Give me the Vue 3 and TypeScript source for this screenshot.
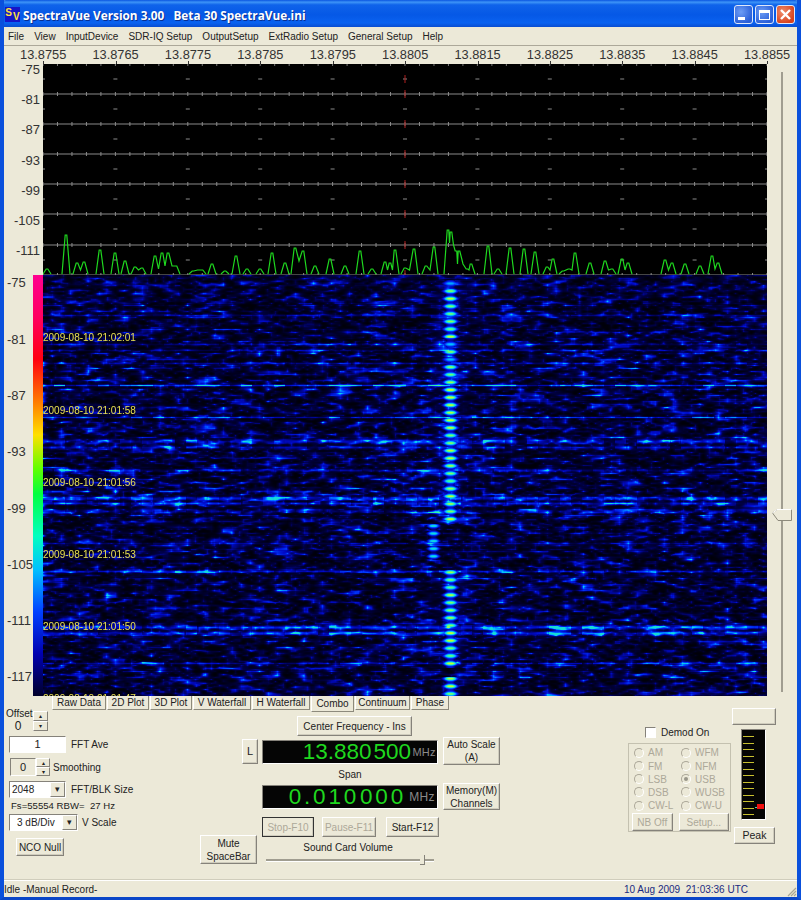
<script setup lang="ts">
import { ref, onMounted } from 'vue'

const menus = ['File', 'View', 'InputDevice', 'SDR-IQ Setup', 'OutputSetup', 'ExtRadio Setup', 'General Setup', 'Help']
const freqs = ['13.8755', '13.8765', '13.8775', '13.8785', '13.8795', '13.8805', '13.8815', '13.8825', '13.8835', '13.8845', '13.8855']
const plotDb = [-75, -81, -87, -93, -99, -105, -111]
const fallDb = [-75, -81, -87, -93, -99, -105, -111, -117]
const stamps = ['21:02:01', '21:01:58', '21:01:56', '21:01:53', '21:01:50', '21:01:47']
const tabs = [
  { label: 'Raw Data', w: 54 },
  { label: '2D Plot', w: 42 },
  { label: '3D Plot', w: 42 },
  { label: 'V Waterfall', w: 58 },
  { label: 'H Waterfall', w: 58 },
  { label: 'Combo', w: 43, active: true },
  { label: 'Continuum', w: 55 },
  { label: 'Phase', w: 38 },
]
const radios = ['AM', 'WFM', 'FM', 'NFM', 'LSB', 'USB', 'DSB', 'WUSB', 'CW-L', 'CW-U']
const meterTicks = Array.from({ length: 13 }, (_, i) => i)

// x, y pairs read off the spectrum trace
const peaks: [number, number][] = [
  [47, 268], [66, 234], [77, 262], [84, 261], [100, 249], [115, 252], [125, 260], [135, 266], [142, 267],
  [155, 255], [162, 252], [168, 252], [176, 265], [193, 270], [202, 269], [212, 263], [225, 270], [236, 255],
  [247, 268], [260, 268], [272, 252], [285, 262], [295, 247], [303, 250], [315, 265], [330, 258], [345, 265],
  [360, 250], [372, 268], [385, 261], [390, 262], [395, 249], [405, 267], [414, 248], [426, 265], [434, 246],
  [448, 229], [451, 231], [456, 250], [459, 250], [467, 268], [471, 263], [488, 245], [498, 268], [510, 247],
  [524, 248], [535, 251], [547, 266], [553, 258], [563, 270], [569, 268], [575, 252], [590, 262], [605, 260],
  [612, 268], [622, 258], [628, 262], [665, 259], [672, 262], [685, 263], [700, 265], [712, 255], [718, 262],
]

// each cluster of peaks starts and ends on the baseline, so the grey line stays visible between them
function tracePath() {
  let d = ''
  peaks.forEach(([x, y], i) => {
    const px = x - 43
    const py = y - 64
    const prev = peaks[i - 1]
    const next = peaks[i + 1]
    if (!prev || x - prev[0] > 9) d += `M${px - 4} 210 `
    d += `L${px - 0.8} ${py + 1} L${px + 0.8} ${py + 1} `
    if (!next || next[0] - x > 9) d += `L${px + 4} 210 `
    else d += `L${px + (next[0] - x) / 2} ${Math.min(py + 14, 206)} `
  })
  return d
}
const trace = tracePath()

const minorTicks = Array.from({ length: 51 }, (_, i) => i * 14.48)
const majorTicks = Array.from({ length: 11 }, (_, i) => i * 72.4)
const gridY = [30, 60, 90, 120, 150, 181, 211]

const fall = ref<HTMLCanvasElement | null>(null)

function mulberry(seed: number) {
  return () => {
    seed |= 0
    seed = (seed + 0x6d2b79f5) | 0
    let t = Math.imul(seed ^ (seed >>> 15), 1 | seed)
    t = (t + Math.imul(t ^ (t >>> 7), 61 | t)) ^ t
    return ((t ^ (t >>> 14)) >>> 0) / 4294967296
  }
}

function colorAt(v: number): [number, number, number] {
  const stops: [number, number, number, number][] = [
    [0, 0, 0, 8],
    [0.22, 0, 0, 70],
    [0.45, 0, 10, 200],
    [0.62, 0, 60, 255],
    [0.78, 0, 190, 255],
    [0.9, 50, 245, 170],
    [1, 190, 255, 50],
  ]
  const c = Math.max(0, Math.min(1, v))
  for (let i = 1; i < stops.length; i++) {
    if (c <= stops[i][0]) {
      const a = stops[i - 1]
      const b = stops[i]
      const t = (c - a[0]) / (b[0] - a[0])
      return [a[1] + (b[1] - a[1]) * t, a[2] + (b[2] - a[2]) * t, a[3] + (b[3] - a[3]) * t]
    }
  }
  return [190, 255, 50]
}

function makeNoise(rnd: () => number, W: number, H: number, cw: number, ch: number) {
  const cols = Math.ceil(W / cw) + 2
  const rows = Math.ceil(H / ch) + 2
  const cells = new Float32Array(cols * rows)
  for (let i = 0; i < cells.length; i++) cells[i] = rnd()
  return (x: number, y: number) => {
    const gx = x / cw
    const gy = y / ch
    const ix = Math.floor(gx)
    const iy = Math.floor(gy)
    const fx = gx - ix
    const fy = gy - iy
    const a = cells[iy * cols + ix]
    const b = cells[iy * cols + ix + 1]
    const c = cells[(iy + 1) * cols + ix]
    const d = cells[(iy + 1) * cols + ix + 1]
    return (a * (1 - fx) + b * fx) * (1 - fy) + (c * (1 - fx) + d * fx) * fy
  }
}

function drawWaterfall() {
  const canvas = fall.value
  if (!canvas) return
  const ctx = canvas.getContext('2d')
  if (!ctx) return
  const W = canvas.width
  const H = canvas.height
  const rnd = mulberry(801)
  const coarse = makeNoise(rnd, W, H, 9, 3)
  const fine = makeNoise(rnd, W, H, 4, 2)

  // horizontal streaks: y inside the waterfall, half height, strength
  const streaks: [number, number, number][] = [
    [40, 1.0, 0.26], [69, 1.2, 0.26], [88, 1.2, 0.28], [110, 1.0, 0.66], [142, 0.9, 0.5],
    [166, 2.4, 0.36], [172, 1.6, 0.34], [195, 1.6, 0.3], [223, 2.0, 0.52], [228, 1.6, 0.44],
    [236, 1.5, 0.26], [296, 1.2, 0.4], [352, 2.0, 0.5], [358, 2.0, 0.44],
    [388, 1.0, 0.36], [268, 1.2, 0.2], [75, 0.9, 0.2],
  ]
  const rowBoost = new Float32Array(H)
  const rowLevel = new Float32Array(H)
  for (const [sy, hh, amp] of streaks) {
    for (let y = Math.max(0, Math.floor(sy - hh * 2)); y < Math.min(H, sy + hh * 2); y++) {
      const d = (y - sy) / hh
      rowBoost[y] = Math.max(rowBoost[y], amp * Math.exp(-d * d))
    }
  }
  for (let y = 0; y < H; y++) rowLevel[y] = 0.85 + 0.3 * rnd()

  // dash pattern for the streaks
  const dash = new Float32Array(W)
  for (let i = 0; i < W; i++) dash[i] = rnd()
  const pulseLevel = new Float32Array(80)
  for (let i = 0; i < pulseLevel.length; i++) pulseLevel[i] = 0.82 + 0.18 * rnd()

  const img = ctx.createImageData(W, H)
  for (let y = 0; y < H; y++) {
    for (let x = 0; x < W; x++) {
      const n1 = coarse(x, y)
      const n2 = fine(x, y)
      let v = (Math.pow(n1, 3) * 0.62 + Math.pow(n2, 2.5) * 0.3) * rowLevel[y]
      if (rowBoost[y] > 0) {
        const on = dash[(Math.floor(x / 11) * 7 + Math.floor(y / 30) * 13) % W]
        v += rowBoost[y] * (0.4 + on * 0.75)
      }
      v = Math.min(v, 0.84)
      // main carrier, pulsing
      if (y > 4 && (y < 249 || (y > 294 && !(y > 392 && y < 402)))) {
        const phase = (y - 8) / 7.6
        const pulse = 0.5 + 0.5 * Math.cos(phase * Math.PI * 2)
        const lvl = pulseLevel[Math.floor(phase + 0.5) & 63]
        const dim = y < 14 || (y > 62 && y < 72) || (y > 80 && y < 90) ? 0.78 : 1
        const dx = (x - 407) / (4.5 + 3.5 * pulse)
        const flat = Math.exp(-Math.pow(Math.abs(dx), 3))
        v = Math.max(v, flat * (0.34 + pulse * 0.56 * lvl) * dim)
        const halo = (x - 407) / 16
        v += Math.exp(-halo * halo) * 0.13
      }
      // carrier that slipped sideways for a moment
      if (y > 248 && y < 286) {
        const pulse = 0.5 + 0.5 * Math.cos(((y - 258) / 7.6) * Math.PI * 2)
        const dx = (x - 390) / (4 + 3 * pulse)
        v = Math.max(v, Math.exp(-Math.pow(Math.abs(dx), 3)) * (0.32 + pulse * 0.52))
      }
      // faint smear to the right of the carrier near the top
      if (y > 10 && y < 45) {
        const dx = (x - 536) / 2
        v += Math.exp(-dx * dx) * 0.14
      }
      const col = colorAt(v)
      const p = (y * W + x) * 4
      img.data[p] = col[0]
      img.data[p + 1] = col[1]
      img.data[p + 2] = col[2]
      img.data[p + 3] = 255
    }
  }
  ctx.putImageData(img, 0, 0)
}

onMounted(drawWaterfall)
</script>

<template>
  <div class="window">
    <header class="titlebar">
      <span class="app-icon"><i>S</i><b>V</b></span>
      <span class="title">SpectraVue Version 3.00&nbsp;&nbsp; Beta 30 SpectraVue.ini</span>
      <span class="caption-btn min"><i></i></span>
      <span class="caption-btn max"><i></i></span>
      <span class="caption-btn close">
        <svg width="13" height="13" viewBox="0 0 13 13"><path d="M2 2 L11 11 M11 2 L2 11" stroke="#fff" stroke-width="2.4" /></svg>
      </span>
    </header>

    <nav class="menubar">
      <span v-for="m in menus" :key="m">{{ m }}</span>
    </nav>

    <section class="scope">
      <div class="scope-main">
        <div class="freq-row">
          <span v-for="f in freqs" :key="f" class="freq">{{ f }}</span>
        </div>

        <div class="plot-row">
          <div class="plot-axis">
            <span v-for="d in plotDb" :key="d">{{ d }}</span>
          </div>
          <svg class="plot" width="724" height="211" viewBox="0 0 724 211">
            <rect width="724" height="211" fill="#000" />
            <g v-for="y in gridY" :key="y">
              <line x1="0" x2="724" :y1="y" :y2="y" stroke="#8a8a8a" stroke-width="1" />
              <line v-for="x in minorTicks" :key="x" :x1="x" :x2="x" :y1="y - 2" :y2="y + 2" stroke="#8a8a8a" stroke-width="1" />
            </g>
            <line v-for="x in minorTicks" :key="'t' + x" :x1="x" :x2="x" y1="0" y2="2" stroke="#777" />
            <g v-for="y in [15, 45, 75, 105, 135, 165, 196]" :key="'d' + y">
              <line v-for="x in majorTicks" :key="x" :x1="x - 2" :x2="x + 2" :y1="y" :y2="y" stroke="#8a8a8a" />
            </g>
            <g stroke="#b02020">
              <line x1="362" x2="362" y1="11" y2="19" />
              <line x1="362" x2="362" y1="26" y2="34" />
              <line x1="362" x2="362" y1="56" y2="64" />
              <line x1="362" x2="362" y1="86" y2="94" />
              <line x1="362" x2="362" y1="116" y2="124" />
              <line x1="362" x2="362" y1="146" y2="154" />
              <line x1="362" x2="362" y1="177" y2="185" />
              <line x1="362" x2="362" y1="206" y2="211" />
            </g>
            <path :d="trace" fill="none" stroke="#1fd81f" stroke-width="1.2" />
          </svg>
        </div>

        <div class="fall-row">
          <div class="fall-axis">
            <span v-for="d in fallDb" :key="d">{{ d }}</span>
          </div>
          <div class="colorbar"></div>
          <div class="fall-wrap">
            <canvas ref="fall" width="724" height="421"></canvas>
            <span
              v-for="(s, i) in stamps"
              :key="s"
              class="stamp"
              :style="{ top: 57 + i * 72.2 + 'px' }"
            >2009-08-10 {{ s }}</span>
          </div>
        </div>
      </div>

      <div class="vslider">
        <div class="vtrack"></div>
        <svg class="vthumb" width="20" height="12" viewBox="0 0 20 12">
          <path d="M0.5 4 L5 0.5 H19.5 V11.5 H6 Z" fill="#ece9d8" stroke="#8d8a7c" />
          <path d="M0.5 4 L5 0.5 H19.5" fill="none" stroke="#fff" />
        </svg>
      </div>
    </section>

    <section class="lower">
      <div class="tabs">
        <span
          v-for="t in tabs"
          :key="t.label"
          class="tab"
          :class="{ active: t.active }"
          :style="{ width: t.w + 'px' }"
        >{{ t.label }}</span>
      </div>

      <div class="panel">
        <div class="col-left">
          <div class="offset">
            <div class="offset-text"><span>Offset</span><span class="offset-val">0</span></div>
            <div class="spin offset-spin"><i>▴</i><i>▾</i></div>
          </div>

          <div class="ctl-row ave">
            <span class="input ave-input">1</span>
            <label>FFT Ave</label>
          </div>

          <div class="ctl-row smooth">
            <span class="input smooth-input">0</span>
            <div class="spin smooth-spin"><i>▴</i><i>▾</i></div>
            <label class="smooth-label">Smoothing</label>
          </div>

          <div class="ctl-row size">
            <span class="combo size-combo"><span>2048</span><i>▾</i></span>
            <label>FFT/BLK Size</label>
          </div>

          <div class="fs">Fs=55554 RBW=&nbsp; 27 Hz</div>

          <div class="ctl-row scale">
            <span class="combo scale-combo"><span>3 dB/Div</span><i>▾</i></span>
            <label>V Scale</label>
          </div>

          <button class="btn nco">NCO Null</button>
        </div>

        <div class="col-mid">
          <button class="btn center-btn">Center Frequency - Ins</button>

          <div class="mid-row row-freq">
            <button class="btn l-btn">L</button>
            <div class="display">
              <span class="digits big">13.880<em></em>500</span>
              <span class="unit">MHz</span>
            </div>
            <button class="btn side-btn">Auto Scale<br />(A)</button>
          </div>

          <div class="span-label">Span</div>

          <div class="mid-row row-span">
            <div class="display span-display">
              <span class="digits wide">0.010<em></em>000</span>
              <span class="unit wide-unit">MHz</span>
            </div>
            <button class="btn side-btn mem-btn">Memory(M)<br />Channels</button>
          </div>

          <div class="mid-row row-run">
            <button class="btn mute-btn">Mute<br />SpaceBar</button>
            <div class="run-col">
              <div class="run-btns">
                <button class="btn run off focused">Stop-F10</button>
                <button class="btn run off pause">Pause-F11</button>
                <button class="btn run start">Start-F12</button>
              </div>
              <div class="vol-label">Sound Card Volume</div>
              <div class="hslider"><span class="hthumb"></span></div>
            </div>
          </div>
        </div>

        <div class="col-demod">
          <div class="demod-check"><span class="checkbox"></span><label>Demod On</label></div>
          <div class="groupbox">
            <div class="radios">
              <div v-for="r in radios" :key="r" class="radio-item">
                <span class="radio" :class="{ on: r === 'USB' }"></span>{{ r }}
              </div>
            </div>
            <div class="group-btns">
              <button class="btn off nb">NB Off</button>
              <button class="btn off setup">Setup...</button>
            </div>
          </div>
        </div>

        <div class="col-meter">
          <button class="btn blank"></button>
          <div class="meter">
            <i v-for="n in meterTicks" :key="n"></i>
            <span class="meter-line"></span>
            <span class="meter-red"></span>
          </div>
          <button class="btn peak">Peak</button>
        </div>
      </div>
    </section>

    <footer class="statusbar">
      <span class="status-left">Idle -Manual Record-</span>
      <span class="status-time">10 Aug 2009&nbsp; 21:03:36 UTC</span>
      <svg class="grip" width="12" height="12" viewBox="0 0 12 12">
        <path d="M11 3 L3 11 M11 6 L6 11 M11 9 L9 11" stroke="#a9a694" stroke-width="1.2" />
      </svg>
    </footer>
  </div>
</template>

<style>
html, body {
  margin: 0;
  background: #0a4fd8;
  overflow: hidden;
}
</style>

<style scoped>
.window {
  width: 801px;
  height: 900px;
  box-sizing: border-box;
  display: flex;
  flex-direction: column;
  background: #ece9d8;
  border-left: 4px solid #0a50dc;
  border-right: 4px solid #0a50dc;
  border-bottom: 3px solid #0a46c8;
  font-family: "Liberation Sans", Arial, sans-serif;
  font-size: 10px;
  color: #222;
  filter: blur(0.35px);
  overflow: hidden;
}

.titlebar {
  height: 27px;
  margin: 0 -4px;
  padding: 2px 6px 0 5px;
  box-sizing: border-box;
  display: flex;
  align-items: center;
  flex: none;
  background: linear-gradient(#0a55e0 0, #3d94f7 8%, #0f63ea 18%, #0558e6 55%, #0a62f0 85%, #0a4dd0 100%);
  border-radius: 6px 6px 0 0;
}
.app-icon {
  width: 15px;
  height: 15px;
  background: #1616c8;
  color: #ffe23a;
  font-size: 10px;
  font-weight: bold;
  margin-right: 3px;
  display: flex;
  justify-content: center;
  gap: 1px;
  line-height: 12px;
}
.app-icon i { font-style: normal; }
.app-icon b { margin-top: 4px; }
.title {
  flex: 1;
  color: #fff;
  font-family: "Open Sans", "DejaVu Sans", sans-serif;
  font-weight: 700;
  font-size: 11.8px;
  text-shadow: 1px 1px 0 #0a2f90;
}
.caption-btn {
  width: 19px;
  height: 19px;
  margin-left: 2px;
  box-sizing: border-box;
  border: 1px solid #dfe8fb;
  border-radius: 3px;
  background: radial-gradient(circle at 35% 35%, #6d9df5, #2a5fd8 75%);
  display: flex;
  align-items: center;
  justify-content: center;
  flex: none;
}
.caption-btn.close { background: radial-gradient(circle at 35% 35%, #ef8d6d, #d8421c 75%); }
.min i { width: 7px; height: 3px; background: #fff; margin: 8px 5px 0 0; }
.max i { width: 11px; height: 10px; border: 1px solid #fff; border-top-width: 3px; box-sizing: border-box; }

.menubar {
  height: 19px;
  flex: none;
  display: flex;
  align-items: center;
  padding-left: 4px;
  gap: 10px;
  font-size: 10px;
  border-bottom: 1px solid #aca899;
  box-sizing: border-box;
}

.scope {
  display: flex;
  flex: none;
}
.scope-main { width: 763px; }
.freq-row {
  height: 18px;
  width: 796px;
  margin-left: 3px;
  display: grid;
  grid-template-columns: repeat(11, 72.4px);
  font-size: 12.8px;
  text-align: center;
  line-height: 17px;
  color: #333;
}
.freq { position: relative; }
.freq::after {
  content: '';
  position: absolute;
  left: 50%;
  bottom: 0;
  height: 3px;
  border-left: 1px solid #333;
}

.plot-row { display: flex; }
.plot-axis {
  width: 36px;
  margin-right: 3px;
  display: flex;
  flex-direction: column;
  align-items: flex-end;
  font-size: 13px;
  color: #333;
}
.plot-axis span { height: 30.2px; line-height: 11px; }
.plot { display: block; flex: none; }

.fall-row { display: flex; height: 421px; }
.fall-axis {
  width: 26px;
  padding-left: 3px;
  display: flex;
  flex-direction: column;
  font-size: 13px;
  color: #333;
}
.fall-axis span { height: 56.3px; line-height: 15px; flex: none; }
.colorbar {
  width: 10px;
  background: linear-gradient(#ff0090 0, #ff0060 10%, #ff0010 20%, #ff7a00 30%, #ffe000 38%, #60ff00 46%, #00ff40 52%, #00ffc0 62%, #00c0ff 70%, #0040ff 80%, #0000b0 90%, #00002a 100%);
}
.fall-wrap {
  position: relative;
  width: 724px;
  height: 421px;
  overflow: hidden;
  background: #000;
}
.fall-wrap canvas { display: block; }
.stamp {
  position: absolute;
  left: 0;
  font-size: 10px;
  line-height: 12px;
  color: #e8e050;
  white-space: nowrap;
}

.vslider {
  position: relative;
  flex: 1;
}
.vtrack {
  width: 2px;
  height: 620px;
  margin: 26px 0 0 14px;
  background: #a09d90;
}
.vthumb {
  position: absolute;
  left: 5px;
  top: 463px;
}

.lower {
  flex: none;
  display: flex;
  flex-direction: column;
}
.tabs {
  height: 15px;
  flex: none;
  display: flex;
  gap: 1px;
  padding-left: 48px;
}
.tab {
  height: 14px;
  box-sizing: border-box;
  text-align: center;
  line-height: 13px;
  font-size: 10px;
  background: #ece9d8;
  border-right: 1px solid #8d8a7c;
  border-bottom: 1px solid #8d8a7c;
  border-left: 1px solid #fff;
  flex: none;
}
.tab.active {
  height: 16px;
  line-height: 16px;
}

.panel {
  display: flex;
  height: 169px;
  flex: none;
}

.btn {
  display: block;
  box-sizing: border-box;
  padding: 0;
  margin: 0;
  background: #ece9d8;
  border: 1px solid;
  border-color: #fff #85827a #85827a #fff;
  box-shadow: inset -1px -1px 0 #cfccbd;
  font-family: inherit;
  font-size: 10px;
  line-height: 13px;
  color: #222;
  text-align: center;
}
.btn.off { color: #aca899; }

.col-left {
  width: 196px;
  margin-top: -3px;
  padding-left: 2px;
  box-sizing: border-box;
}
.offset {
  display: flex;
  height: 23px;
}
.offset-text {
  display: flex;
  flex-direction: column;
  width: 27px;
  line-height: 12px;
  font-size: 10px;
}
.offset-val { text-align: center; font-size: 12px; padding-right: 3px; }
.spin {
  display: flex;
  flex-direction: column;
  box-sizing: border-box;
}
.spin i {
  flex: 1;
  display: block;
  font-style: normal;
  font-size: 6px;
  line-height: 8px;
  text-align: center;
  background: #ece9d8;
  border: 1px solid;
  border-color: #fff #85827a #85827a #fff;
  overflow: hidden;
}
.offset-spin { width: 15px; height: 20px; margin-top: 3px; }

.ctl-row { display: flex; align-items: center; }
.ctl-row label { font-size: 10px; margin-left: 5px; white-space: nowrap; }
.input {
  display: block;
  box-sizing: border-box;
  text-align: center;
  background: #fff;
  border: 1px solid;
  border-color: #85827a #fff #fff #85827a;
  font-size: 11px;
}
.ave { margin: 5px 0 0 3px; height: 17px; }
.ave-input { width: 57px; height: 17px; line-height: 15px; }
.smooth { margin: 5px 0 0 4px; height: 18px; }
.smooth-input { width: 26px; height: 18px; line-height: 16px; background: #ece9d8; }
.smooth-spin { width: 14px; height: 18px; }
.ctl-row .smooth-label { margin-left: 3px; }
.size { margin: 5px 0 0 3px; height: 17px; }
.combo {
  display: flex;
  align-items: center;
  justify-content: space-between;
  box-sizing: border-box;
  height: 17px;
  background: #fff;
  border: 1px solid;
  border-color: #85827a #fff #fff #85827a;
  font-size: 10px;
}
.combo span { padding-left: 2px; }
.combo i {
  width: 15px;
  height: 15px;
  box-sizing: border-box;
  background: #ece9d8;
  border: 1px solid;
  border-color: #fff #85827a #85827a #fff;
  font-style: normal;
  font-size: 9px;
  line-height: 13px;
  text-align: center;
}
.size-combo { width: 57px; }
.fs { margin: 1px 0 0 5px; height: 14px; line-height: 14px; font-size: 9.6px; white-space: nowrap; }
.scale { margin: 1px 0 0 3px; height: 17px; }
.scale-combo { width: 69px; }
.scale-combo span { padding-left: 7px; }
.ctl-row.scale label { margin-left: 4px; }
.nco { width: 48px; height: 18px; margin: 7px 0 0 10px; }

.col-mid {
  width: 300px;
  flex: none;
}
.center-btn { width: 115px; height: 20px; margin: 5px 0 0 97px; }
.mid-row { display: flex; }
.row-freq { margin-top: 1px; height: 28px; padding-left: 42px; }
.l-btn { width: 16px; height: 25px; margin-top: 2px; font-size: 11px; }
.display {
  width: 176px;
  height: 24px;
  margin: 3px 5px 0 4px;
  box-sizing: border-box;
  background: #050505;
  border: 1px solid;
  border-color: #85827a #fff #fff #85827a;
  display: flex;
  align-items: center;
  justify-content: flex-end;
  color: #1fd81f;
}
.digits { font-size: 22.5px; line-height: 22px; }
.digits em { display: inline-block; width: 2px; }
.unit {
  font-size: 11px;
  color: #8a8a8a;
  width: 26px;
  text-align: center;
  letter-spacing: 0.2px;
}
.side-btn { width: 57px; height: 28px; }
.span-label { height: 16px; line-height: 16px; margin: 2px 0 0 62px; width: 176px; text-align: center; font-size: 10px; }
.row-span { padding-left: 58px; height: 27px; }
.span-display { margin-top: 2px; }
.wide { font-size: 22.5px; letter-spacing: 2.8px; margin-right: 3px; }
.wide em { width: 1px; }
.wide-unit { font-size: 12px; margin-right: 2px; }
.mem-btn { height: 27px; }
.row-run { margin-top: 7px; }
.mute-btn { width: 57px; height: 29px; margin-top: 18px; flex: none; }
.run-col { margin-left: 5px; width: 178px; }
.run-btns { display: flex; }
.run { height: 20px; }
.run.focused { width: 52px; border-color: #333; }
.run.pause { width: 54px; margin-left: 8px; }
.run.start { width: 53px; margin-left: 10px; }
.vol-label { text-align: center; width: 172px; height: 14px; line-height: 14px; margin-top: 4px; font-size: 10px; }
.hslider {
  position: relative;
  width: 168px;
  height: 2px;
  margin: 4px 0 0 4px;
  background: #a09d90;
  border-bottom: 1px solid #fff;
}
.hthumb {
  position: absolute;
  left: 154px;
  top: -4px;
  width: 4px;
  height: 9px;
  background: #ece9d8;
  border-right: 1px solid #85827a;
  border-bottom: 1px solid #85827a;
}

.col-demod {
  width: 103px;
  margin-left: 128px;
  flex: none;
}
.demod-check {
  display: flex;
  align-items: center;
  margin: 15px 0 0 17px;
  height: 12px;
}
.checkbox {
  width: 11px;
  height: 11px;
  box-sizing: border-box;
  background: #fff;
  border: 1px solid;
  border-color: #85827a #fff #fff #85827a;
  margin-right: 5px;
}
.demod-check label { font-size: 10px; }
.groupbox {
  margin-top: 5px;
  width: 103px;
  height: 89px;
  box-sizing: border-box;
  border: 1px solid #c4c1b0;
  padding: 1px 1px 0 4px;
}
.radios {
  display: grid;
  grid-template-columns: 47px 1fr;
  grid-auto-rows: 13.2px;
  margin-top: 1px;
  color: #aca899;
  font-size: 10px;
}
.radio-item {
  display: flex;
  align-items: center;
  white-space: nowrap;
}
.radio {
  width: 10px;
  height: 10px;
  box-sizing: border-box;
  border-radius: 50%;
  border: 1px solid #aca899;
  border-right-color: #fff;
  border-bottom-color: #fff;
  margin: 0 4px 0 1px;
  position: relative;
  flex: none;
}
.radio.on::after {
  content: '';
  position: absolute;
  left: 2px;
  top: 2px;
  width: 4px;
  height: 4px;
  border-radius: 50%;
  background: #99968a;
}
.group-btns { display: flex; margin-top: 1px; margin-left: -1px; }
.nb { width: 41px; height: 18px; }
.setup { width: 51px; height: 18px; margin-left: 6px; }

.col-meter {
  width: 44px;
  margin-left: 1px;
  margin-top: -3px;
  flex: none;
}
.blank { width: 44px; height: 17px; }
.meter {
  position: relative;
  width: 25px;
  height: 91px;
  margin: 4px 0 0 9px;
  box-sizing: border-box;
  background: #050505;
  border: 1px solid;
  border-color: #85827a #fff #fff #85827a;
  display: flex;
  flex-direction: column;
  gap: 5.5px;
  padding: 6px 0 0 1px;
}
.meter i {
  display: block;
  width: 11px;
  height: 1px;
  background: #c8c030;
  flex: none;
}
.meter-line {
  position: absolute;
  left: 13px;
  top: 77px;
  width: 3px;
  height: 1px;
  background: #50c8b0;
}
.meter-red {
  position: absolute;
  left: 15px;
  top: 74px;
  width: 7px;
  height: 5px;
  background: #f01010;
}
.peak { width: 41px; height: 17px; margin: 7px 0 0 2px; font-size: 10.5px; }

.statusbar {
  flex: 1;
  display: flex;
  align-items: center;
  position: relative;
  border-top: 1px solid #fff;
  box-shadow: 0 -1px 0 #d0cdbc;
  font-size: 10px;
}
.status-left { width: 620px; }
.status-time { color: #1a2a80; white-space: nowrap; }
.grip { position: absolute; right: 0; bottom: 0; }
</style>
